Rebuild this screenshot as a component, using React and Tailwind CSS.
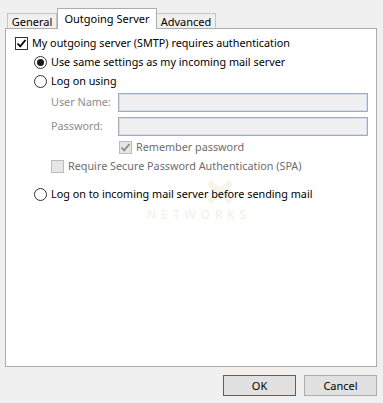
import React from 'react';

const font = { fontFamily: '"Noto Sans", "Segoe UI", sans-serif' };

const CheckBox = ({ checked, disabled }) => (
    <span className={`w-[13px] h-[13px] shrink-0 border flex items-center justify-center ${disabled ? 'border-[#bcbcbc] bg-[#e6e6e6]' : 'border-[#333] bg-white'}`}>
        {checked && (
            <svg width="11" height="11" viewBox="0 0 11 11">
                <path d="M1.5 5.5 L4.2 8.3 L9.5 2" fill="none" stroke={disabled ? '#8a8a8a' : '#000'} strokeWidth="1.8" />
            </svg>
        )}
    </span>
);

const Radio = ({ checked }) => (
    <span className="w-[13px] h-[13px] shrink-0 rounded-full border border-[#333] bg-white flex items-center justify-center">
        {checked && <span className="w-[7px] h-[7px] rounded-full bg-[#1a1a1a]"></span>}
    </span>
);

const Field = ({ label }) => (
    <div className="flex items-center h-[19px]">
        <span className="w-[67px] text-[#8c8c8c]">{label}</span>
        <div className="flex-1 h-[19px] border border-[#a5acb5] bg-[#f0f0f0] shadow-[inset_0_0_0_1px_#cfdff1]"></div>
    </div>
);

export default function App() {
    return (
        <div className="w-[383px] h-[403px] bg-[#f0f0f0] flex flex-col text-[10.8px] leading-none text-black" style={font}>
            {/* Tabs */}
            <div className="flex items-end pl-[7px] pt-[7px] h-[28px] text-[11px]">
                <div className="h-[15px] w-[50px] border border-b-0 border-[#c4c4c4] bg-[#f0f0f0] flex items-center justify-center">General</div>
                <div className="relative z-10 -mb-px h-[21px] w-[100px] border border-b-0 border-[#acacac] bg-white flex items-start justify-center pt-[4px]">Outgoing Server</div>
                <div className="h-[15px] w-[59px] border border-b-0 border-l-0 border-[#c4c4c4] bg-[#f0f0f0] flex items-center justify-center">Advanced</div>
            </div>

            {/* Panel */}
            <div className="mx-[5px] mr-[6px] h-[339px] border border-[#acacac] bg-white pl-[9px] pr-[8px] pt-[8px] flex flex-col">
                <div className="flex items-center gap-[4px] h-[13px]">
                    <CheckBox checked />
                    <span>My outgoing server (SMTP) requires authentication</span>
                </div>
                <div className="pl-[19px] mt-[6px] flex flex-col">
                    <div className="flex items-center gap-[4px] h-[13px]">
                        <Radio checked />
                        <span>Use same settings as my incoming mail server</span>
                    </div>
                    <div className="flex items-center gap-[4px] h-[13px] mt-[6px]">
                        <Radio />
                        <span>Log on using</span>
                    </div>
                    <div className="pl-[17px] mt-[5px] flex flex-col gap-[5px]">
                        <Field label="User Name:" />
                        <Field label="Password:" />
                    </div>
                    <div className="pl-[85px] mt-[5px] flex items-center gap-[4px] h-[13px] text-[#6d6d6d]">
                        <CheckBox checked disabled />
                        <span>Remember password</span>
                    </div>
                    <div className="pl-[17px] mt-[6px] flex items-center gap-[4px] h-[13px] text-[#6d6d6d]">
                        <CheckBox disabled />
                        <span>Require Secure Password Authentication (SPA)</span>
                    </div>
                    <div className="relative mt-[15px] flex items-center gap-[4px] h-[13px]">
                        <Radio />
                        <span className="relative z-10">Log on to incoming mail server before sending mail</span>
                        {/* faint watermark logo */}
                        <svg className="absolute left-[172px] top-[-8px]" width="28" height="24" viewBox="0 0 28 24">
                            <path d="M3 2 L25 22 M25 2 L3 22" stroke="#f4f4e8" strokeWidth="6" fill="none" />
                        </svg>
                    </div>
                    <div className="pl-[113px] mt-[8px] text-[12px] tracking-[5px] text-[#f0f0e2]">NETWORKS</div>
                </div>
            </div>

            {/* Buttons */}
            <div className="flex justify-end gap-[8px] pr-[6px] pt-[8px] text-[11px]">
                <button className="w-[73px] h-[21px] border border-[#0078d7] bg-[#e1e1e1] text-black">OK</button>
                <button className="w-[73px] h-[21px] border border-[#adadad] bg-[#e1e1e1] text-black">Cancel</button>
            </div>
        </div>
    );
}
